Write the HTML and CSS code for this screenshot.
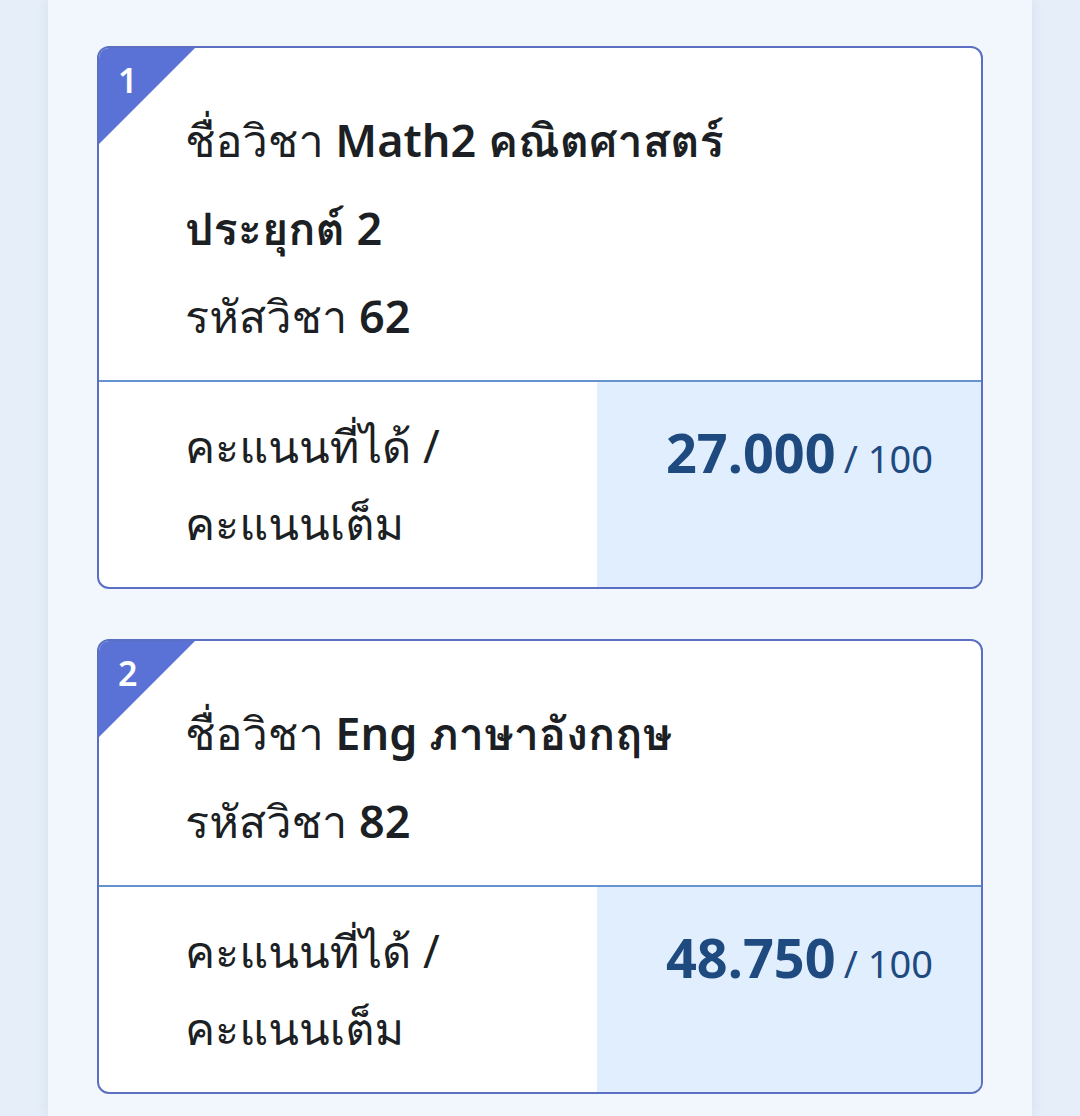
FILE: index.html
```html
<!DOCTYPE html>
<html>
<head>
  <meta charset="utf-8">
  <title>ผลคะแนน</title>
  <link rel="stylesheet" href="styles.css">
</head>
<body>

  <div class="page">

    <div class="card">
      <div class="corner"><span>1</span></div>
      <div class="card-head">
        <div class="subject"><span class="lbl">ชื่อวิชา</span> <b>Math2 คณิตศาสตร์ประยุกต์ 2</b></div>
        <div class="code"><span class="lbl">รหัสวิชา</span> <b>62</b></div>
      </div>
      <div class="card-score">
        <div class="score-label">คะแนนที่ได้ / คะแนนเต็ม</div>
        <div class="score-value"><b>27.000</b> <span>/ 100</span></div>
      </div>
    </div>

    <div class="card">
      <div class="corner"><span>2</span></div>
      <div class="card-head">
        <div class="subject"><span class="lbl">ชื่อวิชา</span> <b>Eng ภาษาอังกฤษ</b></div>
        <div class="code"><span class="lbl">รหัสวิชา</span> <b>82</b></div>
      </div>
      <div class="card-score">
        <div class="score-label">คะแนนที่ได้ / คะแนนเต็ม</div>
        <div class="score-value"><b>48.750</b> <span>/ 100</span></div>
      </div>
    </div>

  </div>

</body>
</html>
```

FILE: styles.css
```css
body {
  font-family: 'Noto Sans', 'Loma', sans-serif;
  background: #e6eff9;
  margin: 0;
  color: #1c1f23;
}

.page {
  width: 984px;
  margin: 0 auto;
  min-height: 1116px;
  background: #f2f7fe;
  box-shadow: 0 0 14px rgba(120, 150, 190, 0.18);
  padding: 46px 49px 0;
  box-sizing: border-box;
}

.card {
  position: relative;
  background: #ffffff;
  border: 2px solid #5b70c2;
  border-radius: 12px;
  overflow: hidden;
  margin-bottom: 50px;
}

.corner {
  position: absolute;
  top: 0;
  left: 0;
  width: 96px;
  height: 96px;
  background: #5a72d6;
  clip-path: polygon(0 0, 100% 0, 0 100%);
}

.corner span {
  position: absolute;
  left: 19px;
  top: 10px;
  color: #fff;
  font-size: 34px;
  font-weight: 600;
  line-height: 44px;
}

.card-head {
  padding: 48px 40px 20px 86px;
  font-size: 45px;
  line-height: 88px;
  border-bottom: 2px solid #6593d0;
}

.subject {
  max-width: 590px;
}

.card-head .lbl {
  font-weight: 400;
}

.card-head b {
  font-weight: 600;
}

.card-score {
  display: flex;
}

.score-label {
  width: 300px;
  padding: 25px 112px 26px 86px;
  font-size: 45px;
  line-height: 77px;
}

.score-value {
  flex: 1;
  background: #e1eefd;
  padding: 40px 48px 0 0;
  text-align: right;
  color: #1f4a80;
  line-height: 60px;
}

.score-value b {
  font-size: 54px;
  font-weight: 700;
}

.score-value span {
  font-size: 38px;
  margin-left: 4px;
}
```
